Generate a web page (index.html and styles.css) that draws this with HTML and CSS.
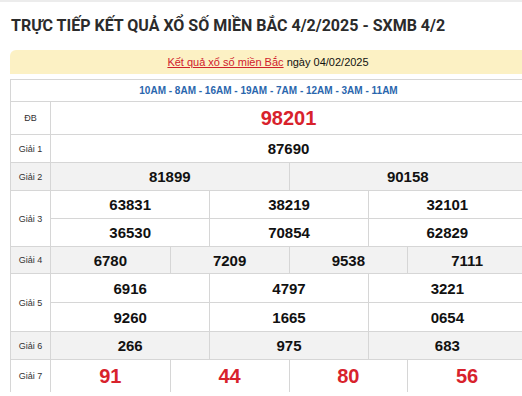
FILE: index.html
```html
<!DOCTYPE html>
<html lang="vi">
<head>
<meta charset="utf-8">
<title>XSMB</title>
<link rel="stylesheet" href="styles.css">
</head>
<body>
<div class="page">
  <h1 class="title">TRỰC TIẾP KẾT QUẢ XỔ SỐ MIỀN BẮC 4/2/2025 - SXMB 4/2</h1>
  <div class="notice"><a href="#">Kết quả xổ số miền Bắc</a> ngày 04/02/2025</div>
  <div class="table">
    <div class="times">10AM - 8AM - 16AM - 19AM - 7AM - 12AM - 3AM - 11AM</div>
    <div class="row r-db">
      <div class="label">ĐB</div>
      <div class="nums c1"><div class="cell red big">98201</div></div>
    </div>
    <div class="row">
      <div class="label">Giải 1</div>
      <div class="nums c1"><div class="cell">87690</div></div>
    </div>
    <div class="row gray">
      <div class="label">Giải 2</div>
      <div class="nums c2"><div class="cell">81899</div><div class="cell">90158</div></div>
    </div>
    <div class="row">
      <div class="label">Giải 3</div>
      <div class="nums c3">
        <div class="cell">63831</div><div class="cell">38219</div><div class="cell">32101</div>
        <div class="cell">36530</div><div class="cell">70854</div><div class="cell">62829</div>
      </div>
    </div>
    <div class="row gray r-g4">
      <div class="label">Giải 4</div>
      <div class="nums c4"><div class="cell">6780</div><div class="cell">7209</div><div class="cell">9538</div><div class="cell">7111</div></div>
    </div>
    <div class="row r-g5">
      <div class="label">Giải 5</div>
      <div class="nums c3">
        <div class="cell">6916</div><div class="cell">4797</div><div class="cell">3221</div>
        <div class="cell">9260</div><div class="cell">1665</div><div class="cell">0654</div>
      </div>
    </div>
    <div class="row gray">
      <div class="label">Giải 6</div>
      <div class="nums c3"><div class="cell">266</div><div class="cell">975</div><div class="cell">683</div></div>
    </div>
    <div class="row r-db">
      <div class="label">Giải 7</div>
      <div class="nums c4"><div class="cell red big">91</div><div class="cell red big">44</div><div class="cell red big">80</div><div class="cell red big">56</div></div>
    </div>
  </div>
</div>
</body>
</html>
```
FILE: styles.css
```css
html, body {
  margin: 0;
  padding: 0;
  overflow: hidden;
  background: #fff;
}
body {
  border-top: 2px solid #ececec;
  font-family: "Liberation Sans", Arial, sans-serif;
  color: #000;
}
.page {
  width: 516px;
  margin-left: 10px;
}
.title {
  margin: 0;
  padding: 14px 0 0 1px;
  height: 34px;
  box-sizing: border-box;
  font-family: Roboto, "Liberation Sans", sans-serif;
  font-weight: 700;
  font-size: 16px;
  line-height: 20px;
  color: #2b2b2b;
  white-space: nowrap;
}
.notice {
  margin-top: 14px;
  height: 24px;
  background: #fcf1c4;
  border-radius: 6px 0 0 0;
  text-align: center;
  font-size: 11px;
  line-height: 24px;
  color: #111;
}
.notice a {
  color: #d0202c;
  text-decoration: underline;
}
.table {
  margin-top: 5px;
  border-top: 1px solid #d6d6d6;
  border-left: 1px solid #d6d6d6;
}
.times {
  height: 21px;
  line-height: 21px;
  text-align: center;
  font-size: 10px;
  font-weight: 700;
  color: #2a66ad;
}
.row {
  display: flex;
  border-top: 1px solid #d6d6d6;
}
.row.gray {
  background: #f2f2f2;
}
.label {
  width: 39px;
  flex: none;
  display: flex;
  align-items: center;
  justify-content: center;
  font-size: 9px;
  color: #333;
  border-right: 1px solid #d6d6d6;
}
.nums {
  flex: 1;
  display: grid;
}
.c1 { grid-template-columns: 1fr; }
.c2 { grid-template-columns: repeat(2, 1fr); }
.c3 { grid-template-columns: repeat(3, 1fr); }
.c4 { grid-template-columns: repeat(4, 1fr); }
.cell {
  height: 27px;
  display: flex;
  align-items: center;
  justify-content: center;
  font-size: 15px;
  font-weight: 700;
  color: #111;
}
.c2 .cell + .cell,
.c3 .cell:not(:nth-child(3n+1)),
.c4 .cell + .cell {
  border-left: 1px solid #d6d6d6;
}
.c3 .cell:nth-child(n+4) {
  border-top: 1px solid #d6d6d6;
}
.r-db .cell {
  height: 32px;
}
.r-g4 .cell {
  height: 26px;
}
.r-g5 .cell {
  height: 28px;
}
.red {
  color: #d8222c;
}
.big {
  font-size: 20px;
}
```
